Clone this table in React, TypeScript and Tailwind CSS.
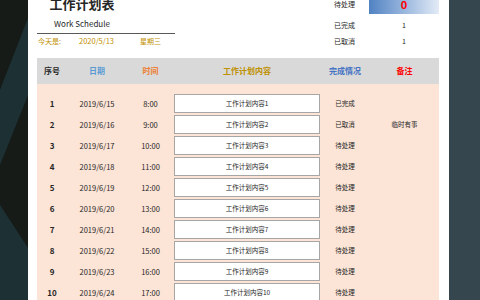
import React from 'react';

const rows = [
  { no: 1, date: '2019/6/15', time: '8:00', status: '已完成', note: '' },
  { no: 2, date: '2019/6/16', time: '9:00', status: '已取消', note: '临时有事' },
  { no: 3, date: '2019/6/17', time: '10:00', status: '待处理', note: '' },
  { no: 4, date: '2019/6/18', time: '11:00', status: '待处理', note: '' },
  { no: 5, date: '2019/6/19', time: '12:00', status: '待处理', note: '' },
  { no: 6, date: '2019/6/20', time: '13:00', status: '待处理', note: '' },
  { no: 7, date: '2019/6/21', time: '14:00', status: '待处理', note: '' },
  { no: 8, date: '2019/6/22', time: '15:00', status: '待处理', note: '' },
  { no: 9, date: '2019/6/23', time: '16:00', status: '待处理', note: '' },
  { no: 10, date: '2019/6/24', time: '17:00', status: '待处理', note: '' },
];

const font = { fontFamily: '"Noto Sans CJK SC", "Noto Sans", sans-serif' };

const LeftStrip = () => (
  <svg width="28" height="300" viewBox="0 0 28 300" className="shrink-0">
    <rect width="28" height="300" fill="#161b18" />
    <polygon points="0,90 28,18 28,95 0,165" fill="#1d3134" />
    <polygon points="0,205 28,248 28,300 0,300" fill="#1d3134" />
  </svg>
);

export default function App() {
  return (
    <div className="w-[480px] h-[300px] flex overflow-hidden bg-white" style={font}>
      <LeftStrip />
      <div className="w-[421px] shrink-0 bg-white pl-[9px] pr-[10px] flex flex-col">
        {/* top header */}
        <div className="h-[58px] flex shrink-0">
          <div className="w-[138px] flex flex-col">
            <div className="w-[90px] text-center">
              <div className="-mt-[3px] h-[14px] leading-[14px] text-[13px] font-bold text-[#262626]">工作计划表</div>
              <div className="mt-[7px] h-[12px] leading-[12px] text-[8px] text-[#262626]">Work Schedule</div>
            </div>
            <div className="mt-[3px] border-b border-[#595959]" />
            <div className="mt-[1px] h-[12px] flex items-center text-[7px] text-[#bf9000] leading-[12px]">
              <span className="w-[42px] pl-[1px]">今天是:</span>
              <span className="w-[61px] text-[7.5px]">2020/5/13</span>
              <span>星期三</span>
            </div>
          </div>
          <div className="flex-1 pl-[159px] flex flex-col text-[7px] text-[#262626]">
            <div className="-mt-[6px] h-[20px] flex items-center">
              <span className="w-[35px]">待处理</span>
              <div className="w-[70px] h-[20px] flex items-center justify-center bg-gradient-to-r from-[#5082c2] to-[#e3ebf6] text-[11px] font-bold text-[#ff0000]">0</div>
            </div>
            <div className="mt-[3px] h-[16px] flex items-center">
              <span className="w-[35px]">已完成</span>
              <span className="w-[70px] text-center">1</span>
            </div>
            <div className="h-[17px] flex items-center">
              <span className="w-[35px]">已取消</span>
              <span className="w-[70px] text-center">1</span>
            </div>
          </div>
        </div>

        {/* table header */}
        <div className="h-[26px] shrink-0 bg-[#d9d9d9] flex items-center text-[8px] font-bold">
          <div className="w-[30px] text-center text-[#262626]">序号</div>
          <div className="w-[60px] text-center text-[#5b9bd5]">日期</div>
          <div className="w-[47px] text-center text-[#ed7d31]">时间</div>
          <div className="w-[146px] text-center text-[#bf9000]">工作计划内容</div>
          <div className="w-[50px] text-center text-[#4472c4]">完成情况</div>
          <div className="w-[69px] text-center text-[#ff0000]">备注</div>
        </div>

        {/* table body */}
        <div className="flex-1 bg-[#fce4d6] pt-[9px] text-[#262626]">
          {rows.map((r) => (
            <div key={r.no} className="h-[21px] flex items-center">
              <div className="w-[30px] text-center text-[8px] font-bold">{r.no}</div>
              <div className="w-[60px] text-center text-[7.5px]">{r.date}</div>
              <div className="w-[47px] text-center text-[7.5px]">{r.time}</div>
              <div className="w-[146px] h-[19px] bg-white border border-[#a6a6a6] flex items-center justify-center text-[6.5px]">
                工作计划内容{r.no}
              </div>
              <div className="w-[50px] text-center text-[6.5px]">{r.status}</div>
              <div className="w-[69px] text-center text-[6.5px]">{r.note}</div>
            </div>
          ))}
        </div>
      </div>
      <div className="flex-1 bg-[#36464f]" />
    </div>
  );
}
